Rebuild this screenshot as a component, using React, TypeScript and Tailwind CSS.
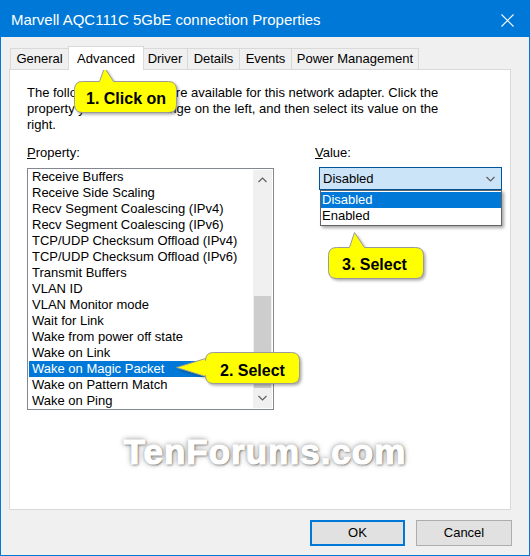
import React from 'react';

const properties = [
	'Receive Buffers',
	'Receive Side Scaling',
	'Recv Segment Coalescing (IPv4)',
	'Recv Segment Coalescing (IPv6)',
	'TCP/UDP Checksum Offload (IPv4)',
	'TCP/UDP Checksum Offload (IPv6)',
	'Transmit Buffers',
	'VLAN ID',
	'VLAN Monitor mode',
	'Wait for Link',
	'Wake from power off state',
	'Wake on Link',
	'Wake on Magic Packet',
	'Wake on Pattern Match',
	'Wake on Ping',
];

const tabs = [
	{ label: 'General', w: 'w-[59px]' },
	{ label: 'Advanced', w: 'w-[76px]', active: true },
	{ label: 'Driver', w: 'w-[46px]' },
	{ label: 'Details', w: 'w-[53px]' },
	{ label: 'Events', w: 'w-[53px]' },
	{ label: 'Power Management', w: 'w-[128px]' },
];

// yellow callout: box path + pointer, drawn as one shape
function Callout({
	className,
	width,
	height,
	path,
	text,
	textClass,
}: {
	className: string;
	width: number;
	height: number;
	path: string;
	text: string;
	textClass: string;
}) {
	return (
		<div className={`absolute ${className}`}>
			<svg width={width} height={height} className="absolute left-0 top-0 overflow-visible">
				<path d={path} fill="#000" opacity="0.35" transform="translate(2 2)" style={{ filter: 'blur(1.5px)' }} />
				<path d={path} fill="#ffff00" stroke="#9a9a9a" strokeWidth="1" />
			</svg>
			<span className={`absolute text-[16px] font-bold text-black whitespace-nowrap ${textClass}`}>
				{text}
			</span>
		</div>
	);
}

function Chevron({ up }: { up?: boolean }) {
	return (
		<svg width="9" height="6" viewBox="0 0 9 6">
			<path
				d={up ? 'M0.5 5 L4.5 1 L8.5 5' : 'M0.5 1 L4.5 5 L8.5 1'}
				fill="none"
				stroke="#606060"
				strokeWidth="1.2"
			/>
		</svg>
	);
}

export default function App() {
	return (
		<div className="relative w-[530px] h-[556px] bg-[#f0f0f0] border border-[#0078d7] font-['Liberation_Sans',Arial,sans-serif] text-[13px] text-black overflow-hidden">
			{/* title bar */}
			<div className="flex items-center justify-between h-[36px] bg-[#0078d7] pl-[10px] pr-[15px] pt-[3px]">
				<span className="text-[15px] text-white">Marvell AQC111C 5GbE connection Properties</span>
				<svg width="13" height="13" viewBox="0 0 13 13">
					<path d="M0.5 0.5 L12.5 12.5 M12.5 0.5 L0.5 12.5" stroke="#fff" strokeWidth="1.1" />
				</svg>
			</div>

			{/* tabs */}
			<div className="flex items-end h-[23px] mt-[9px] ml-[9px]">
				{tabs.map((t) =>
					t.active ? (
						<div
							key={t.label}
							className={`relative z-10 -mb-px -mx-px h-[24px] ${t.w} px-[2px] bg-white border border-b-0 border-[#d9d9d9] flex items-start justify-center pt-[2px] text-[13px]`}
						>
							{t.label}
						</div>
					) : (
						<div
							key={t.label}
							className={`h-[21px] ${t.w} bg-[#f0f0f0] border border-b-0 border-[#d9d9d9] flex items-center justify-center text-[13px] -ml-px first:ml-0`}
						>
							{t.label}
						</div>
					),
				)}
			</div>

			{/* tab page */}
			<div className="relative ml-[8px] w-[502px] h-[441px] bg-white border border-[#d9d9d9] pl-[17px] pt-[15px]">
				<p className="w-[425px] leading-[16px]">
					The following properties are available for this network adapter. Click the property you want to change on the left, and then select its value on the right.
				</p>

				<div className="flex mt-[12px]">
					<div className="w-[247px]">
						<div className="leading-[16px]">
							<span className="underline">P</span>roperty:
						</div>
						<div className="mt-[7px] h-[242px] border border-[#828790] bg-white flex">
							<ul className="flex-1 pl-[1px]">
								{properties.map((p) => (
									<li
										key={p}
										className={`h-[16px] leading-[16px] pl-[3px] whitespace-nowrap ${
											p === 'Wake on Magic Packet' ? 'bg-[#0078d7] text-white' : ''
										}`}
									>
										{p}
									</li>
								))}
							</ul>
							<div className="w-[19px] my-px mr-px bg-[#f0f0f0] flex flex-col">
								<div className="h-[20px] flex items-center justify-center">
									<Chevron up />
								</div>
								<div className="mt-[106px] h-[92px] mx-[1px] bg-[#cdcdcd]" />
								<div className="flex-1 flex items-center justify-center">
									<Chevron />
								</div>
							</div>
						</div>
					</div>

					<div className="ml-[41px] relative">
						<div className="leading-[16px]">
							<span className="underline">V</span>alue:
						</div>
						<div className="mt-[6px] ml-[4px] w-[183px] h-[23px] bg-[#cce4f7] border border-[#005499] flex items-center justify-between pl-[3px] pr-[6px]">
							<span>Disabled</span>
							<Chevron />
						</div>
						{/* open dropdown */}
						<div className="absolute left-[5px] top-[45px] w-[182px] bg-white border border-[#646464] shadow-[2px_2px_3px_rgba(0,0,0,0.35)] py-px z-10">
							<div className="h-[16px] leading-[16px] pl-[1px] bg-[#0078d7] text-white">Disabled</div>
							<div className="h-[16px] leading-[16px] pl-[1px]">Enabled</div>
						</div>
					</div>
				</div>

				{/* watermark */}
				<div className="absolute left-[10px] right-0 top-[356px] text-center text-[35px] font-bold text-white tracking-[1px] [-webkit-text-stroke:1.2px_#fff] [text-shadow:1px_1px_2px_#666,0_0_4px_#999,0_0_7px_#bbb]">
					TenForums.com
				</div>
			</div>

			{/* buttons */}
			<div className="flex justify-end gap-[11px] mt-[10px] pr-[17px]">
				<button className="w-[95px] h-[26px] bg-[#e1e1e1] border-2 border-[#0078d7]">OK</button>
				<button className="w-[96px] h-[26px] bg-[#e1e1e1] border border-[#adadad]">Cancel</button>
			</div>

			<Callout
				className="left-[73px] top-[65px]"
				width={104}
				height={48}
				path="M8.5 15.5 L25.5 15.5 L30.5 1.5 L39.5 15.5 L94.5 15.5 Q102.5 15.5 102.5 23.5 L102.5 38.5 Q102.5 46.5 94.5 46.5 L8.5 46.5 Q0.5 46.5 0.5 38.5 L0.5 23.5 Q0.5 15.5 8.5 15.5 Z"
				text="1. Click on"
				textClass="left-[12px] top-[21px]"
			/>
			<Callout
				className="left-[175px] top-[351px]"
				width={125}
				height={33}
				path="M37.5 0.5 L115.5 0.5 Q123.5 0.5 123.5 8.5 L123.5 23.5 Q123.5 31.5 115.5 31.5 L37.5 31.5 Q29.5 31.5 29.5 23.5 L29.5 24.5 L0.5 15.5 L29.5 6.5 L29.5 8.5 Q29.5 0.5 37.5 0.5 Z"
				text="2. Select"
				textClass="left-[44px] top-[7px]"
			/>
			<Callout
				className="left-[327px] top-[230px]"
				width={97}
				height={48}
				path="M8.5 16.5 L21.5 16.5 L26.5 1.5 L36.5 16.5 L87.5 16.5 Q95.5 16.5 95.5 24.5 L95.5 39.5 Q95.5 47.5 87.5 47.5 L8.5 47.5 Q0.5 47.5 0.5 39.5 L0.5 24.5 Q0.5 16.5 8.5 16.5 Z"
				text="3. Select"
				textClass="left-[14px] top-[22px]"
			/>
		</div>
	);
}
